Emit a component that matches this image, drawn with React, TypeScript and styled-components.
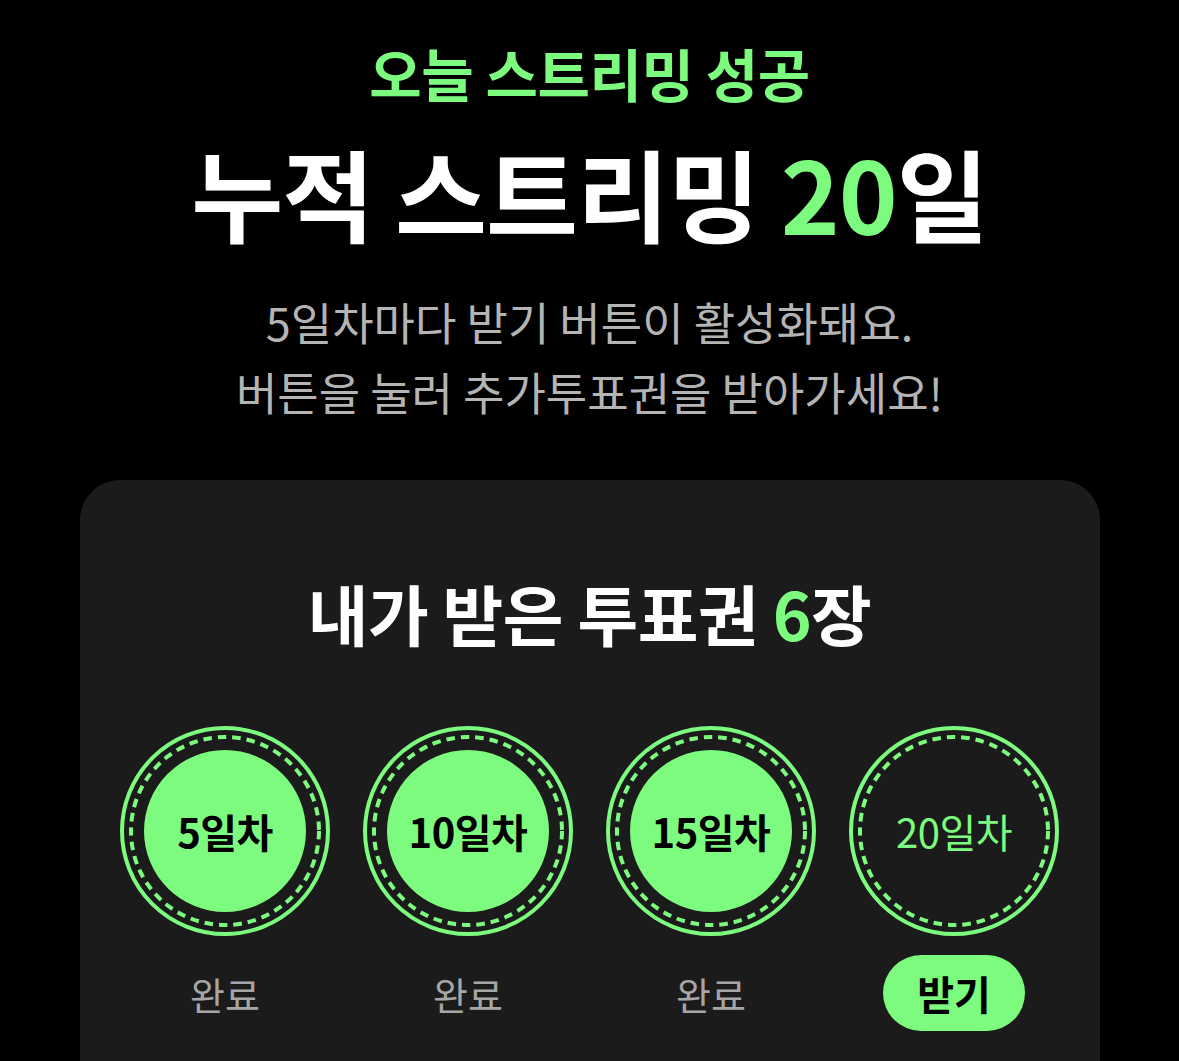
import React from "react";
import styled, { createGlobalStyle } from "styled-components";

const GREEN = "#7dfb7e";

const GlobalStyle = createGlobalStyle`
  html, body {
    margin: 0;
    padding: 0;
    background: #000000;
  }
  body {
    font-family: "Noto Sans CJK KR", "Noto Sans", sans-serif;
    overflow: hidden;
  }
`;

const Page = styled.div`
  display: flex;
  flex-direction: column;
  align-items: center;
  padding-top: 32px;
  min-height: 1061px;
  box-sizing: border-box;
`;

const Eyebrow = styled.div`
  color: ${GREEN};
  font-size: 57px;
  font-weight: 700;
  line-height: 80px;
  letter-spacing: -0.5px;
`;

const Headline = styled.h1`
  margin: 20px 0 0;
  color: #ffffff;
  font-size: 100px;
  font-weight: 700;
  line-height: 120px;
  letter-spacing: -1px;
`;

const Accent = styled.span`
  color: ${GREEN};
`;

const Description = styled.p`
  margin: 35px 0 0;
  color: #b4b4b4;
  font-size: 45px;
  font-weight: 400;
  line-height: 70px;
  text-align: center;
`;

const Card = styled.section`
  margin-top: 53px;
  width: 1020px;
  flex: 1;
  background: #1b1b1b;
  border-radius: 40px 40px 0 0;
  display: flex;
  flex-direction: column;
  align-items: center;
  padding-top: 92px;
`;

const CardTitle = styled.h2`
  margin: 0;
  color: #ffffff;
  font-size: 66px;
  font-weight: 700;
  line-height: 80px;
  letter-spacing: -0.5px;
`;

const Rewards = styled.div`
  margin-top: 73px;
  display: grid;
  grid-template-columns: repeat(4, 243px);
`;

const Reward = styled.div`
  display: flex;
  flex-direction: column;
  align-items: center;
`;

const Badge = styled.div`
  position: relative;
  width: 212px;
  height: 212px;
  display: flex;
  align-items: center;
  justify-content: center;
`;

const Rings = styled.svg`
  position: absolute;
  inset: 0;
`;

const BadgeText = styled.span<{ $done: boolean }>`
  position: relative;
  color: ${(p) => (p.$done ? "#000000" : GREEN)};
  font-size: 40px;
  font-weight: ${(p) => (p.$done ? 700 : 400)};
  letter-spacing: -0.5px;
`;

const Status = styled.div`
  margin-top: 18px;
  height: 76px;
  display: flex;
  align-items: center;
  color: #a6a6a6;
  font-size: 38px;
  font-weight: 400;
`;

const ClaimButton = styled.button`
  all: unset;
  margin-top: 18px;
  width: 142px;
  height: 76px;
  border-radius: 38px;
  background: ${GREEN};
  color: #000000;
  font-size: 40px;
  font-weight: 700;
  display: flex;
  align-items: center;
  justify-content: center;
  cursor: pointer;
`;

function BadgeRings({ done }: { done: boolean }) {
  return (
    <Rings viewBox="0 0 212 212" width="212" height="212">
      <circle cx="106" cy="106" r="103" fill="none" stroke={GREEN} strokeWidth="4" />
      <circle
        cx="106"
        cy="106"
        r="94"
        fill="none"
        stroke={GREEN}
        strokeWidth="4"
        strokeDasharray="8.5 6"
      />
      {done && <circle cx="106" cy="106" r="81" fill={GREEN} />}
    </Rings>
  );
}

const rewards = [
  { day: 5, done: true },
  { day: 10, done: true },
  { day: 15, done: true },
  { day: 20, done: false },
];

export default function App() {
  return (
    <>
      <GlobalStyle />
      <Page>
        <Eyebrow>오늘 스트리밍 성공</Eyebrow>
        <Headline>
          누적 스트리밍 <Accent>20</Accent>일
        </Headline>
        <Description>
          5일차마다 받기 버튼이 활성화돼요.
          <br />
          버튼을 눌러 추가투표권을 받아가세요!
        </Description>
        <Card>
          <CardTitle>
            내가 받은 투표권 <Accent>6</Accent>장
          </CardTitle>
          <Rewards>
            {rewards.map((r) => (
              <Reward key={r.day}>
                <Badge>
                  <BadgeRings done={r.done} />
                  <BadgeText $done={r.done}>{r.day}일차</BadgeText>
                </Badge>
                {r.done ? <Status>완료</Status> : <ClaimButton>받기</ClaimButton>}
              </Reward>
            ))}
          </Rewards>
        </Card>
      </Page>
    </>
  );
}
